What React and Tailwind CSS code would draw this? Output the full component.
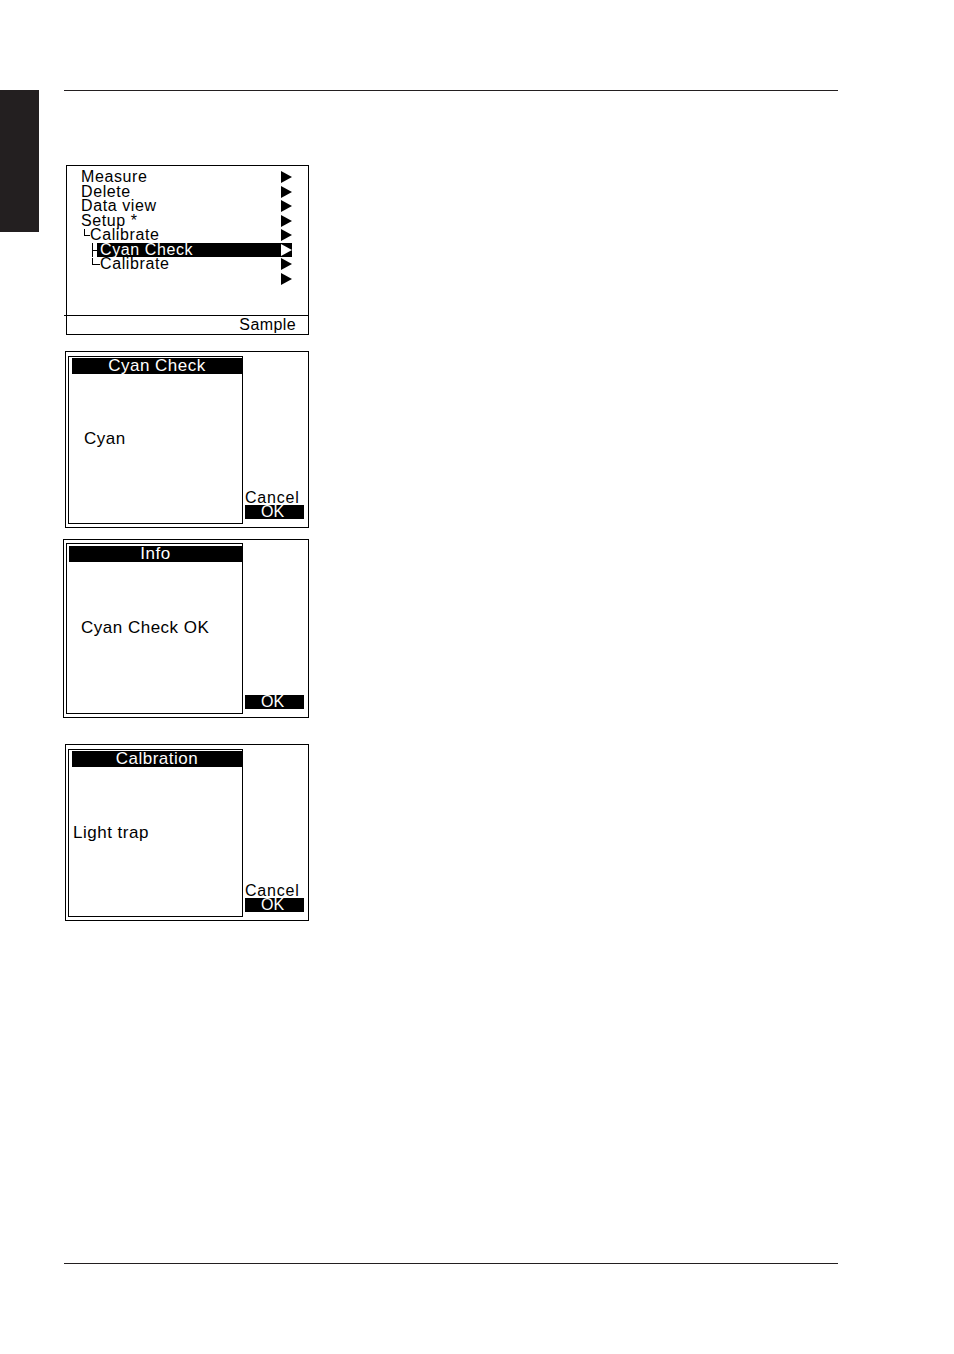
import React from 'react';

const font = "font-['Liberation_Sans',Arial,sans-serif]";

function Arrow({ white }) {
  return (
    <svg width="11" height="12" viewBox="0 0 11 12" className="shrink-0">
      <polygon points="0,0 11,6 0,12" fill={white ? '#fff' : '#000'} />
    </svg>
  );
}

// tree connectors of the menu
function Elbow({ w }) {
  return (
    <svg width={w} height="14.5" viewBox={`0 0 ${w} 14.5`} className="shrink-0" shapeRendering="crispEdges">
      <path d={`M0.5 1V7.5H${w}`} stroke="#000" strokeWidth="1" fill="none" />
    </svg>
  );
}

function Tee({ w }) {
  return (
    <svg width={w} height="14.5" viewBox={`0 0 ${w} 14.5`} className="shrink-0" shapeRendering="crispEdges">
      <path d={`M0.5 0V14.5M0.5 7.5H${w}`} stroke="#000" strokeWidth="1" fill="none" />
    </svg>
  );
}

const menu = [
  { label: 'Measure' },
  { label: 'Delete' },
  { label: 'Data view' },
  { label: 'Setup *' },
  { label: 'Calibrate', indent: 'w-[3px]', conn: <Elbow w={6} /> },
  { label: 'Cyan Check', indent: 'w-[11px]', conn: <Tee w={5} />, active: true },
  { label: 'Calibrate', indent: 'w-[11px]', conn: <Elbow w={8} /> },
  { label: '' },
];

function MenuScreen() {
  return (
    <div className="ml-[2px] mt-[74px] w-[243px] h-[170px] border border-black flex flex-col">
      <div className="h-[149px] pt-[4px]">
        {menu.map((m, i) => (
          <div key={i} className="flex h-[14.5px] pl-[14px] pr-[16px]">
            {m.indent && <div className={`${m.indent} shrink-0`} />}
            {m.conn}
            <div className={`flex-1 flex items-center justify-between ${m.active ? 'bg-black text-white pl-[3px]' : ''}`}>
              <span className="text-[16px] leading-[14.5px] tracking-[0.6px] whitespace-nowrap">{m.label}</span>
              <Arrow white={m.active} />
            </div>
          </div>
        ))}
      </div>
      <div className="flex-1 border-t border-black -ml-[3px] flex items-center justify-end pr-[12px]">
        <span className="text-[16px] leading-[16px] tracking-[0.4px]">Sample</span>
      </div>
    </div>
  );
}

function Dialog({ box, inner, bar, body, title, text, cancel }) {
  return (
    <div className={`${box} border border-black flex`}>
      <div className={`${inner} border border-black flex flex-col`}>
        <div className={`${bar} h-[16px] bg-black text-white text-center text-[17px] leading-[15px] tracking-[0.5px]`}>
          {title}
        </div>
        <div className={`${body} text-[17px] leading-[17px] tracking-[0.5px]`}>{text}</div>
      </div>
      <div className="ml-[2px] w-[59px] flex flex-col justify-end pb-[5px]">
        {cancel && <div className="text-[16px] leading-[14px] tracking-[0.8px] whitespace-nowrap">Cancel</div>}
        <div className="h-[14px] bg-black text-white text-center pr-[4px] text-[16px] leading-[14px]">OK</div>
      </div>
    </div>
  );
}

export default function App() {
  return (
    <div className={`w-[954px] h-[1354px] bg-white text-black ${font}`}>
      <div className="flex pt-[90px]">
        <div className="w-[39px] h-[142px] bg-[#231f20] shrink-0" />
        <div className="ml-[25px] w-[774px]">
          <div className="h-px bg-[#231f20]" />
          <MenuScreen />
          <div className="mt-[16px] ml-[1px]">
            <Dialog
              box="w-[244px] h-[177px] pl-[2px] pt-[4px] pb-[3px]"
              inner="w-[175px]"
              bar="mt-[1px] ml-[3px]"
              body="pt-[56px] pl-[15px]"
              title="Cyan Check"
              text="Cyan"
              cancel
            />
          </div>
          <div className="mt-[11px] -ml-[1px]">
            <Dialog
              box="w-[246px] h-[179px] pl-[2px] pt-[3px] pb-[3px]"
              inner="w-[177px]"
              bar="mt-[2px] ml-[2px]"
              body="pt-[57px] pl-[14px]"
              title="Info"
              text="Cyan Check OK"
            />
          </div>
          <div className="mt-[26px] ml-[1px]">
            <Dialog
              box="w-[244px] h-[177px] pl-[2px] pt-[4px] pb-[3px]"
              inner="w-[175px]"
              bar="mt-[1px] ml-[3px]"
              body="pt-[57px] pl-[4px]"
              title="Calbration"
              text="Light trap"
              cancel
            />
          </div>
          <div className="mt-[342px] h-px bg-[#231f20]" />
        </div>
      </div>
    </div>
  );
}
